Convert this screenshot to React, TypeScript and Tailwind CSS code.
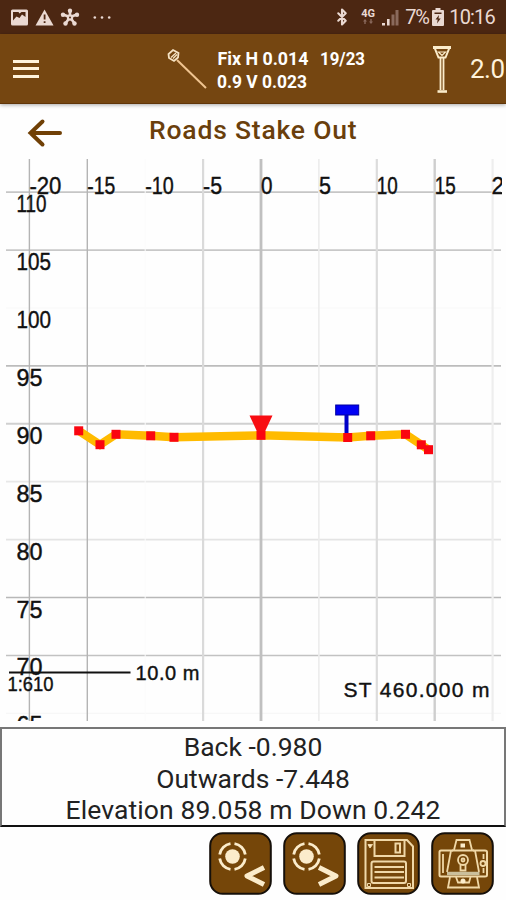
import type { ReactNode } from 'react';
import { Bluetooth } from 'lucide-react';

const CREAM = '#fbeccb';

// chart scale, px per metre
const SCALE = 11.58;
const px = (offset: number) => 261 + offset * SCALE;
const py = (elevation: number) => 264.8 + (90 - elevation) * SCALE;

interface GridLine {
  value: number;
  color: string;
  width: number;
  labelWidth: number;
}

const columns: GridLine[] = [
  { value: -20, color: '#b4b4b4', width: 1.4, labelWidth: 32 },
  { value: -15, color: '#b4b4b4', width: 1.4, labelWidth: 28 },
  { value: -10, color: '#fbfbfb', width: 1, labelWidth: 28.5 },
  { value: -5, color: '#dadada', width: 2.2, labelWidth: 19 },
  { value: 0, color: '#c0c0c0', width: 2.8, labelWidth: 11.5 },
  { value: 5, color: '#ececec', width: 1.6, labelWidth: 12 },
  { value: 10, color: '#dcdcdc', width: 2.2, labelWidth: 21 },
  { value: 15, color: '#cecece', width: 2.4, labelWidth: 21 },
  { value: 20, color: '#eeeeee', width: 2.2, labelWidth: 12 },
];

const rows: GridLine[] = [
  { value: 110, color: '#c6c6c6', width: 1.8, labelWidth: 30 },
  { value: 105, color: '#c8c8c8', width: 1.6, labelWidth: 34.5 },
  { value: 100, color: '#f8f8f8', width: 1, labelWidth: 34.5 },
  { value: 95, color: '#bcbcbc', width: 1.6, labelWidth: 26 },
  { value: 90, color: '#d0d0d0', width: 2, labelWidth: 26 },
  { value: 85, color: '#e8e8e8', width: 1.8, labelWidth: 26 },
  { value: 80, color: '#e4e4e4', width: 1.6, labelWidth: 26 },
  { value: 75, color: '#b8b8b8', width: 1.5, labelWidth: 26 },
  { value: 70, color: '#c2c2c2', width: 1.5, labelWidth: 26 },
  { value: 65, color: '#f6f6f6', width: 1, labelWidth: 26 },
];

const section = [
  [78.7, 271.8],
  [100, 285.7],
  [116, 275.3],
  [150.7, 276.8],
  [174, 278.3],
  [261, 276.3],
  [347.7, 278.5],
  [370.7, 276.8],
  [405.5, 275.3],
  [421.3, 285.8],
  [428.5, 290.7],
];

function StatusBar() {
  return (
    <div className="h-[34px] shrink-0 bg-[#4c2712] flex items-center justify-between text-[#ead9d2]">
      <svg width="120" height="34" viewBox="0 0 120 34" fill="#ead9d2">
        <rect x="11" y="9.5" width="17" height="16" rx="1.5" />
        <path d="M13 12h5.5l1 1.500 2-1.500h4v5l-3.500-2.500-2.500 3.500-3-1.500-3.500 4z" fill="#4c2712" />
        <path d="M44.500 9.500 53.500 25.500H35.500z" />
        <path d="M43.700 14.500h1.800v5h-1.800zM43.700 21.200h1.800v1.800h-1.800z" fill="#4c2712" />
        <g stroke="#ead9d2" strokeWidth="2.600" fill="none" strokeLinecap="round">
          <path d="M70 17V11M70 17l-7-2.500M70 17l7-2.500M70 17l-4.500 6.500M70 17l4.500 6.500" />
        </g>
        <circle cx="70" cy="10.800" r="2.200" />
        <circle cx="63" cy="14.800" r="2.200" />
        <circle cx="77" cy="14.800" r="2.200" />
        <circle cx="65.500" cy="23.500" r="2.200" />
        <circle cx="74.500" cy="23.500" r="2.200" />
        <circle cx="70" cy="17.500" r="3.200" />
        <circle cx="70" cy="17.500" r="1" fill="#4c2712" />
        <circle cx="94.800" cy="17.500" r="1.300" />
        <circle cx="102" cy="17.500" r="1.300" />
        <circle cx="109.200" cy="17.500" r="1.300" />
      </svg>
      <div className="flex items-center h-full pr-[11px]">
        <Bluetooth className="w-[18px] h-[20px] mr-[10px]" strokeWidth={2.8} />
        <div className="flex flex-col items-center w-[14px] mr-[6px] -mt-[1px]">
          <span className="text-[11px] leading-[10px] font-bold">4G</span>
          <svg width="12" height="5" viewBox="0 0 12 5" fill="#8a6a5c">
            <path d="M1 2.500 3 0l2 2.500H3.700V5H2.300V2.500zM7 2.500h1.300V0h1.400v2.500H11L9 5z" />
          </svg>
        </div>
        <svg width="18" height="18" viewBox="0 0 18 18" className="mr-[6px]">
          <path d="M1 15h3v2.500H1zM6 11h2.600v6.500H6z" fill="#ead9d2" />
          <path d="M10.500 6.500h3v11h-3zM14.500 2h3v15.500h-3z" fill="#8a6a5c" />
        </svg>
        <span className="text-[20px] leading-none w-[24px] whitespace-nowrap tracking-[-1.2px]">7%</span>
        <svg width="12" height="18" viewBox="0 0 12 18" className="ml-[3px] mr-[5px]">
          <path d="M3.500 0h5v2H11a1 1 0 0 1 1 1v14a1 1 0 0 1-1 1H1a1 1 0 0 1-1-1V3a1 1 0 0 1 1-1h2.500z" fill="#ead9d2" />
          <path d="M2.500 4.500h7v1.500h-7zM7 7 3.500 11.500H5.700L5 15.500 8.700 10.500H6.500z" fill="#4c2712" />
        </svg>
        <span className="text-[20px] leading-none tracking-[-0.8px]">10:16</span>
      </div>
    </div>
  );
}

function AppBar() {
  return (
    <div className="h-[70px] shrink-0 bg-[#754611] border-b border-[#603508] shadow-[0_1px_4px_rgba(0,0,0,0.35)] flex items-center overflow-hidden z-10">
      <button className="ml-[13px] w-[26px] flex flex-col gap-[4.500px]">
        <span className="block h-[3px] bg-[#fff3dc]" />
        <span className="block h-[3px] bg-[#fff3dc]" />
        <span className="block h-[3px] bg-[#fff3dc]" />
      </button>
      <svg width="42" height="42" viewBox="0 0 42 42" className="ml-[126px] shrink-0" fill="none" stroke="#f0c490">
        <path d="M12 12 41 40" strokeWidth="2" />
        <path d="M8 2 13.500 5 13 9.500 9 13 4 10 3.500 6z" stroke="#f5e3c4" strokeWidth="1.800" />
        <path d="M6 9.500 11 5M8 10.500 12 6.500" stroke="#f5e3c4" strokeWidth="1.300" />
      </svg>
      <svg width="160" height="48" viewBox="0 0 160 48" fill="#fff" className="ml-[10px] shrink-0 text-[18px] font-bold">
        <text x="0.500" y="19.500" textLength="91" lengthAdjust="spacingAndGlyphs">Fix H 0.014</text>
        <text x="103" y="19.500" textLength="45" lengthAdjust="spacingAndGlyphs">19/23</text>
        <text x="0" y="42.500" textLength="90" lengthAdjust="spacingAndGlyphs">0.9 V 0.023</text>
      </svg>
      <svg width="20" height="50" viewBox="0 0 20 50" className="ml-[55px] shrink-0" fill="none" stroke={CREAM}>
        <path d="M2.500 3.500H17.500L13.500 13.500H6.500z" strokeWidth="2" />
        <path d="M1 3.500H19" strokeWidth="3" />
        <path d="M6.500 8H13.500L10 11.500z" strokeWidth="1.200" />
        <path d="M8.500 13V46M11.500 13V46" strokeWidth="1.800" />
        <path d="M5.500 47.500H15" strokeWidth="2.600" />
      </svg>
      <span className="ml-[18px] text-[26px] text-[#fff3dc] tracking-[-0.5px] mt-[1px]">2.0</span>
    </div>
  );
}

function CrossSection() {
  return (
    <svg width="506" height="563" viewBox="0 0 506 563" className="block shrink-0 font-['Liberation_Sans',Arial,sans-serif]">
      {rows.map(r => (
        <line key={r.value} x1="6" x2="501" y1={py(r.value)} y2={py(r.value)} stroke={r.color} strokeWidth={r.width} />
      ))}
      {columns.map(c => (
        <line key={c.value} x1={px(c.value)} x2={px(c.value)} y1="0" y2="562" stroke={c.color} strokeWidth={c.width} />
      ))}

      <svg x="0" y="0" width="502" height="562">
        <g fill="#111" stroke="#111" strokeWidth="0.400" fontSize="23">
          {columns.map(c =>
            c.value === 20 ? (
              <text key={c.value} x={px(c.value) - 1} y="34.500">{c.value}</text>
            ) : (
              <text key={c.value} x={px(c.value)} y="34.500" textLength={c.labelWidth} lengthAdjust="spacingAndGlyphs">
                {c.value}
              </text>
            )
          )}
          {rows.map(r => (
            <text key={r.value} x="16.500" y={py(r.value) + 20} textLength={r.labelWidth} lengthAdjust="spacingAndGlyphs">
              {r.value}
            </text>
          ))}
        </g>
      </svg>

      {/* scale bar and station */}
      <path d="M9 513.500H130.500" stroke="#111" strokeWidth="2" />
      <g fill="#111" stroke="#111" strokeWidth="0.400">
        <text x="7.500" y="531.500" fontSize="21" textLength="46" lengthAdjust="spacingAndGlyphs">1:610</text>
        <text x="135.500" y="520.500" fontSize="20" textLength="64" lengthAdjust="spacing">10.0 m</text>
        <text x="343.500" y="537.500" fontSize="21" textLength="146" lengthAdjust="spacing">ST 460.000 m</text>
      </g>

      {/* road profile */}
      <polyline points={section.map(p => p.join(',')).join(' ')} fill="none" stroke="#ffbb00" strokeWidth="8.500" />
      <path d="M249.500 256.500H272.500L261 281z" fill="#f80d12" />
      <path d="M346.500 256V276" stroke="#0000c8" strokeWidth="4" />
      <rect x="335.700" y="246" width="23" height="10" fill="#0000f5" stroke="#0000a0" />
      {section.map(([x, y]) => (
        <rect key={x} x={x - 4.5} y={y - 4.5} width="9" height="9" fill="#fa0510" />
      ))}
    </svg>
  );
}

function IconButton({ children }: { children: ReactNode }) {
  return (
    <button className="w-[63px] h-[63px]">
      <svg width="63" height="63" viewBox="0 0 63 63" fill="none" stroke={CREAM}>
        <rect x="1.200" y="1.200" width="60.600" height="60.600" rx="12.500" fill="#754609" stroke="#16100a" strokeWidth="2" />
        {children}
      </svg>
    </button>
  );
}

function Target() {
  return (
    <>
      <circle cx="23.500" cy="24.500" r="7.300" fill={CREAM} stroke="none" />
      <path
        d="M25.500 11.700A13 13 0 0 1 36.300 22.500M36.300 26.500A13 13 0 0 1 25.500 37.300M21.500 37.300A13 13 0 0 1 10.700 26.500M10.700 22.500A13 13 0 0 1 21.500 11.700"
        strokeWidth="2.800"
      />
    </>
  );
}

export default function App() {
  return (
    <div className="w-[506px] h-[900px] bg-[#fefefe] flex flex-col overflow-hidden font-[Roboto,sans-serif]">
      <StatusBar />
      <AppBar />

      <div className="h-[55px] shrink-0 flex items-center text-[#6a3f0c]">
        <svg width="36" height="30" viewBox="0 0 36 30" className="ml-[27px] mt-[2px]" fill="none" stroke="#704006" strokeWidth="4">
          <path d="M3.500 15H33M15.500 3.500 3.500 15 15.500 26.500" strokeLinecap="round" />
        </svg>
        <h1 className="ml-[86px] text-[26.5px] leading-none font-medium tracking-[0.8px] whitespace-nowrap -mt-[3px]">
          Roads Stake Out
        </h1>
      </div>

      <CrossSection />

      <div className="mt-[5px] h-[100px] shrink-0 border-2 border-t-[#777] border-x-[#777] border-b-[#111] pt-[2px] flex flex-col items-center text-[26.5px] leading-[31.7px] text-[#222] whitespace-nowrap">
        <span>Back -0.980</span>
        <span>Outwards -7.448</span>
        <span className="tracking-[0.1px]">Elevation 89.058 m Down 0.242</span>
      </div>

      <div className="mt-[5px] pr-[12px] flex justify-end gap-[11px]">
        <IconButton>
          <Target />
          <path d="M55 35.500 38 44 55 52.500" strokeWidth="5" strokeLinejoin="round" />
        </IconButton>
        <IconButton>
          <Target />
          <path d="M36 35.500 53 44 36 52.500" strokeWidth="5" strokeLinejoin="round" />
        </IconButton>
        <IconButton>
          <g strokeWidth="2" stroke="#f0d8a8">
            <path d="M8.500 8H50L56 14.500V56H8.500z" />
            <path d="M17.500 9V24H47.500V9M38.500 11.500H43V20.500H38.500z" />
            <rect x="14.500" y="29.500" width="34.500" height="21.500" rx="2" />
            <path d="M17.500 35H47M17.500 40H47M17.500 45.500H47" />
            <path d="M10.500 51.500h3v3h-3zM50.500 51.500h3v3h-3z" strokeWidth="1" />
            <path d="M11 12.500h4.500L13 16z" fill={CREAM} strokeWidth="1" />
          </g>
        </IconButton>
        <IconButton>
          <g strokeWidth="1.800" stroke="#f0d8a8">
            <path d="M23 18 25.500 8H38.500L41 18" />
            <rect x="29.500" y="11.500" width="4.500" height="4" fill={CREAM} stroke="none" />
            <path d="M22 18.500H10Q8.500 18.500 8.500 20V43Q8.500 44.500 10 44.500H54Q56 44.500 56 43V20Q56 18.500 54 18.500H42" strokeWidth="2" />
            <path d="M20 18.500 16 40M44 18.500 48 40M21 18.500H43M12 22V41M52.500 22V27M52.500 36V41" />
            <circle cx="32" cy="28" r="5" />
            <circle cx="32" cy="28" r="1.500" />
            <path d="M29.500 33V38.500H34.500V33" />
            <circle cx="52" cy="31.500" r="2.500" />
            <path d="M16 41.500H48.500" stroke="#cbbf9c" strokeWidth="3.500" />
            <path d="M19 45 17 55.500H48L46 45M25 45 27 50.500H38L39.500 45" />
            <circle cx="32" cy="49" r="2.500" fill={CREAM} stroke="none" />
          </g>
        </IconButton>
      </div>
    </div>
  );
}
